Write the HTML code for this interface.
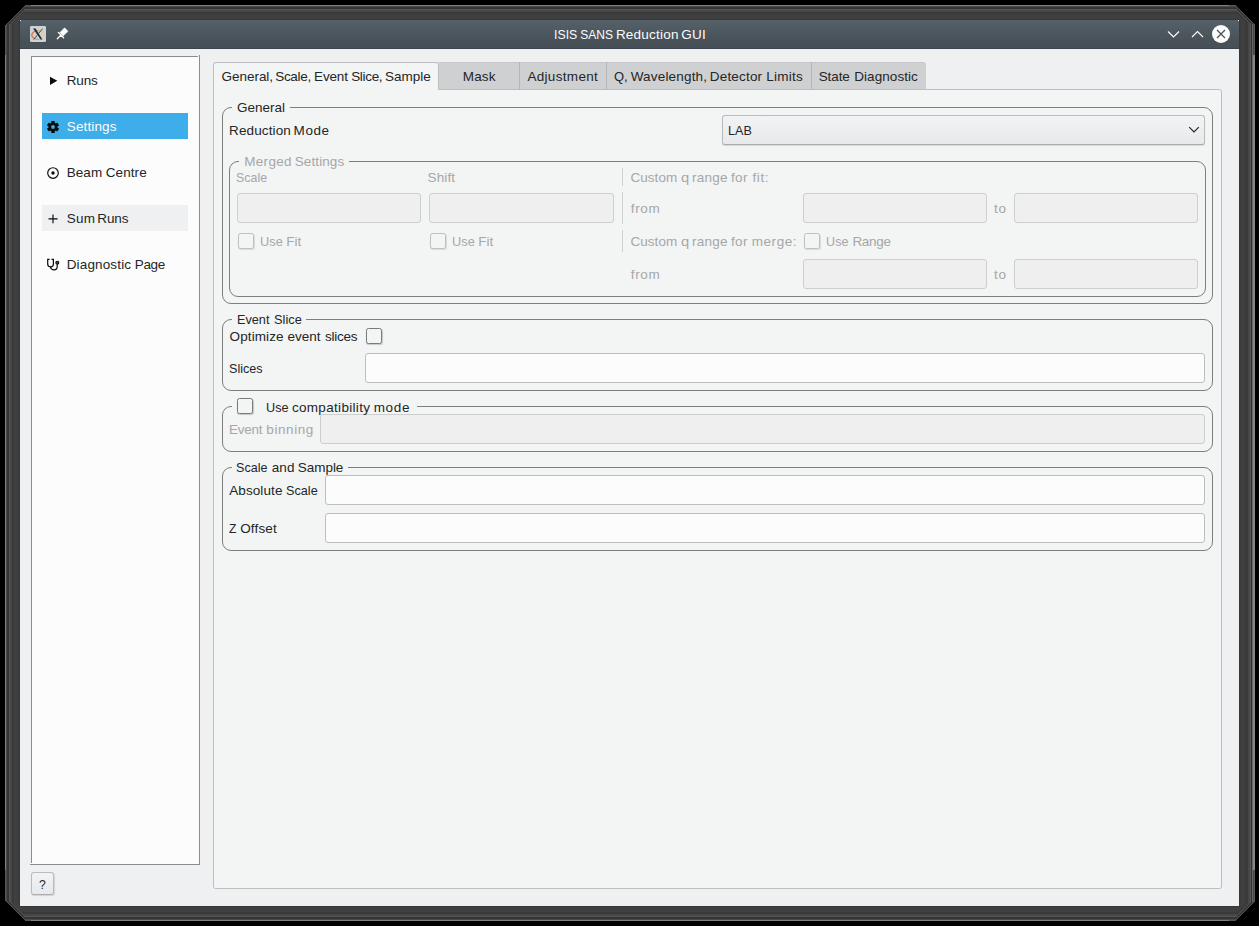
<!DOCTYPE html>
<html><head><meta charset="utf-8"><title>ISIS SANS Reduction GUI</title>
<style>
html,body{margin:0;padding:0;}
body{width:1259px;height:926px;background:#000;overflow:hidden;position:relative;font-family:"Liberation Sans",sans-serif;font-size:13.5px;color:#232627;}
.abs{position:absolute;}
#shadow{position:absolute;left:0;top:0;width:1259px;height:926px;}
#win{position:absolute;left:20px;top:20px;width:1219px;height:886px;background:#eff0f1;}
#titlebar{position:absolute;left:0;top:0;width:1219px;height:29px;background:linear-gradient(#556068,#475057 80%,#475057);}
#titlebar:after{content:"";position:absolute;left:0;right:0;bottom:0;height:1px;background:#3c454d;}
.t{position:absolute;white-space:pre;line-height:20px;height:20px;}
#side{position:absolute;left:31px;top:56px;width:169px;height:809px;background:#fcfcfc;}
.sl{position:absolute;background:#888d92;}
.sel{position:absolute;left:42px;top:113px;width:146px;height:26px;background:#3daee9;}
.hov{position:absolute;left:42px;top:205px;width:146px;height:26px;background:#eff0f1;}
#pane{position:absolute;left:213px;top:89px;width:1007px;height:798px;border:1px solid #bcbebf;border-radius:0 2.5px 2.5px 2.5px;background:#f3f4f4;}
.tabbar{position:absolute;left:439px;top:62px;width:487px;height:27px;background:#cfd0d1;border-top:1px solid #c6c7c8;border-radius:0 3px 0 0;box-sizing:border-box;}
.tabsep{position:absolute;top:62px;width:1px;height:27px;background:#b4b5b6;}
#tabsel{position:absolute;left:213px;top:62px;width:224px;height:27px;border:1px solid #bcbebf;border-bottom:none;border-radius:3px 3px 0 0;background:#f3f4f4;}
.gb{position:absolute;border:1px solid #7d7e7f;border-radius:9px;box-sizing:border-box;}
.gap{position:absolute;height:3px;background:#f3f4f4;}
.le{position:absolute;box-sizing:border-box;border:1px solid #bcbebf;border-radius:3px;background:#fcfcfc;height:30px;}
.le.dis{background:#efefef;border-color:#cdcecf;}
.cb{position:absolute;box-sizing:border-box;width:16px;height:16px;border:1px solid #777a7c;border-radius:2.5px;background:#f3f4f4;box-shadow:0.5px 1px 1px rgba(0,0,0,0.18);}
.cb.dis{border-color:#bdbfc0;box-shadow:0.5px 1px 1px rgba(0,0,0,0.10);}
.vl{position:absolute;width:1px;background:#cfd0d1;}
#combo{position:absolute;left:722px;top:115px;width:483px;height:30px;box-sizing:border-box;border:1px solid #b9bbbc;border-radius:3px;background:linear-gradient(#f2f3f4,#e8e9ea);box-shadow:0 1px 1px rgba(0,0,0,0.12);border-bottom-color:#a9abac;}
#help{position:absolute;left:31px;top:872px;width:23px;height:23px;box-sizing:border-box;border:1px solid #b9bbbc;border-bottom-color:#a9abac;border-radius:3px;background:linear-gradient(#f2f3f4,#e8e9ea);box-shadow:0.5px 1px 1px rgba(0,0,0,0.12);}
svg{position:absolute;overflow:visible;}

</style></head>
<body>
<svg id="shadow" width="1259" height="926" viewBox="0 0 1259 926" shape-rendering="crispEdges"><polygon points="25,5 1235,5 1255,25 1255,901 1235,921 25,921 5,901 5,25" fill="#555555"/><polygon points="25,6 1235,6 1254,25 1254,901 1235,920 25,920 6,901 6,25" fill="#4a4a4a"/><polygon points="24,7 1236,7 1253,24 1253,902 1236,919 24,919 7,902 7,24" fill="#363636"/><polygon points="24,8 1236,8 1252,24 1252,902 1236,918 24,918 8,902 8,24" fill="#343434"/><polygon points="24,9 1236,9 1251,24 1251,902 1236,917 24,917 9,902 9,24" fill="#555555"/><polygon points="23,10 1237,10 1250,23 1250,903 1237,916 23,916 10,903 10,23" fill="#484848"/><polygon points="23,11 1237,11 1249,23 1249,903 1237,915 23,915 11,903 11,23" fill="#464646"/><polygon points="23,12 1237,12 1248,23 1248,903 1237,914 23,914 12,903 12,23" fill="#3a3a3a"/><polygon points="22,13 1237,13 1246,22 1246,904 1237,913 22,913 13,904 13,22" fill="#393939"/><polygon points="22,14 1237,14 1245,22 1245,904 1237,912 22,912 14,904 14,22" fill="#404040"/><polygon points="22,15 1237,15 1244,22 1244,904 1237,911 22,911 15,904 15,22" fill="#3f3f3f"/><polygon points="21,16 1238,16 1243,21 1243,905 1238,910 21,910 16,905 16,21" fill="#3f3f3f"/><polygon points="21,17 1238,17 1242,21 1242,905 1238,909 21,909 17,905 17,21" fill="#3f3f3f"/><polygon points="21,18 1238,18 1241,21 1241,905 1238,908 21,908 18,905 18,21" fill="#3d3d3d"/><polygon points="20,19 1239,19 1240,20 1240,906 1239,907 20,907 19,906 19,20" fill="#383838"/><rect x="31" y="5" width="1198" height="1" fill="#808080"/><rect x="5" y="55" width="1" height="815" fill="#808080"/><rect x="31" y="920" width="1198" height="1" fill="#808080"/><rect x="1253" y="55" width="2" height="815" fill="#858585"/><rect x="1252" y="24" width="1" height="878" fill="#666"/></svg>
<div id="win">
 <div id="titlebar"></div>
</div>
<!-- titlebar icons -->
<svg style="left:30px;top:26px" width="16" height="16" viewBox="0 0 16 16">
 <defs><linearGradient id="xg" x1="0" x2="1" y1="0" y2="0"><stop offset="0" stop-color="#e8521a"/><stop offset="0.55" stop-color="#f0a050"/><stop offset="1" stop-color="#f0d090"/></linearGradient></defs>
 <rect x="0" y="0" width="16" height="16" rx="1.2" fill="#c9d3d9"/>
 <ellipse cx="8" cy="9" rx="6.2" ry="4.4" fill="none" stroke="url(#xg)" stroke-width="1.2" opacity="0.9"/>
 <path d="M3 2.6 L5.6 2.6 L12.4 13.6 L10.6 13.6 Z" fill="#2a2d30"/>
 <path d="M12.6 2.6 L3.6 13.6" stroke="#3a3d40" stroke-width="0.9"/>
</svg>
<svg style="left:52px;top:24px" width="20" height="20" viewBox="0 0 20 20"><path d="M12.6 3.8 L16 7.3 L11.2 11.9 L7.9 8.5 Z" fill="#fcfcfc" stroke="#fcfcfc" stroke-width="0.5" stroke-linejoin="round"/><path d="M6.3 8.4 L11.6 13.7 M8.8 11.2 L5.3 14.7" stroke="#fcfcfc" stroke-width="1.3" stroke-linecap="round" fill="none"/></svg>
<!-- window buttons -->
<svg style="left:1166.5px;top:28.3px" width="13" height="13" viewBox="0 0 13 13"><path d="M1 3.5 L6.5 9 L12 3.5" fill="none" stroke="#fcfcfc" stroke-width="1.2"/></svg>
<svg style="left:1190.5px;top:28.3px" width="13" height="13" viewBox="0 0 13 13"><path d="M1 9 L6.5 3.5 L12 9" fill="none" stroke="#fcfcfc" stroke-width="1.2"/></svg>
<svg style="left:1212px;top:25px" width="18" height="18" viewBox="0 0 18 18"><circle cx="9" cy="9" r="9" fill="#fcfcfc"/><path d="M5 5 L13 13 M13 5 L5 13" stroke="#475057" stroke-width="1.2" fill="none"/></svg>

<div class="abs cornerpx" style="left:20px;top:20px;width:1px;height:1px;background:#e4e6e7"></div><div class="abs cornerpx" style="left:1238px;top:20px;width:1px;height:1px;background:#e4e6e7"></div><div id="side"></div><div class="sl" style="left:31px;top:56px;width:167px;height:1px"></div><div class="sl" style="left:31px;top:56px;width:1px;height:807px"></div><div class="sl" style="left:199px;top:55px;width:1px;height:810px"></div><div class="sl" style="left:30px;top:864px;width:170px;height:1px"></div>
<div class="sel"></div>
<div class="hov"></div>
<!-- sidebar icons -->
<svg style="left:49px;top:76px" width="10" height="10" viewBox="0 0 10 10"><path d="M1 0.7 L8.3 4.85 L1 9 Z" fill="#0b0b0b"/></svg>
<svg style="left:46px;top:120px" width="14" height="14" viewBox="0 0 14 14">
 <g fill="#0b0b0b"><circle cx="7" cy="7" r="4.4"/>
 <rect x="5.25" y="1" width="3.5" height="12" rx="0.5"/><rect x="5.25" y="1" width="3.5" height="12" rx="0.5" transform="rotate(60 7 7)"/><rect x="5.25" y="1" width="3.5" height="12" rx="0.5" transform="rotate(120 7 7)"/></g>
 <circle cx="7" cy="7" r="1.9" fill="#3daee9"/>
</svg>
<svg style="left:47px;top:166.5px" width="12" height="12" viewBox="0 0 12 12"><circle cx="6" cy="6" r="5.3" fill="none" stroke="#0b0b0b" stroke-width="1.15"/><circle cx="6" cy="6" r="1.7" fill="#0b0b0b"/></svg>
<svg style="left:48px;top:214px" width="10" height="10" viewBox="0 0 10 10"><path d="M5 0.6 V9.2 M0.5 4.9 H9.6" stroke="#0b0b0b" stroke-width="1.15" fill="none"/></svg>
<svg style="left:42px;top:252px" width="24" height="24" viewBox="0 0 24 24"><path d="M7.6 7.3 H5.7 V11.9 A2.85 2.85 0 0 0 11.4 11.9 V7.3 H9.5 M8.4 14.8 C8.9 16.9 10.4 17.8 12 17.8 C14 17.8 15.2 16.5 15.2 14.5 V12.2" fill="none" stroke="#0b0b0b" stroke-width="1.2"/><circle cx="15.3" cy="10.7" r="1.45" fill="#555" stroke="#0b0b0b" stroke-width="1.1"/></svg>

<!-- tabs -->
<div class="tabbar"></div>
<div class="tabsep" style="left:519px"></div>
<div class="tabsep" style="left:606px"></div>
<div class="tabsep" style="left:811px"></div>
<div id="pane"></div>
<div id="tabsel"></div>

<!-- group boxes -->
<div class="gb" style="left:222px;top:107px;width:991px;height:197px"></div>
<div class="gap" style="left:232px;top:106px;width:58px"></div>
<div class="gb" style="left:229px;top:161px;width:977px;height:136px"></div>
<div class="gap" style="left:239px;top:160px;width:110px"></div>
<div class="gb" style="left:222px;top:319px;width:991px;height:72px"></div>
<div class="gap" style="left:232px;top:318px;width:74px"></div>
<div class="gb" style="left:222px;top:406px;width:991px;height:46px"></div>
<div class="gap" style="left:232px;top:405px;width:185px"></div>
<div class="gb" style="left:222px;top:467px;width:991px;height:84px"></div>
<div class="gap" style="left:232px;top:466px;width:116px"></div>

<div id="combo"></div>
<svg style="left:1188px;top:125px" width="12" height="10" viewBox="0 0 12 10"><path d="M1.2 2.2 L6 7 L10.8 2.2" fill="none" stroke="#232627" stroke-width="1.2"/></svg>

<div class="le dis" style="left:237px;top:193px;width:184px"></div>
<div class="le dis" style="left:429px;top:193px;width:185px"></div>
<div class="le dis" style="left:803px;top:193px;width:184px"></div>
<div class="le dis" style="left:1014px;top:193px;width:184px"></div>
<div class="le dis" style="left:803px;top:259px;width:184px"></div>
<div class="le dis" style="left:1014px;top:259px;width:184px"></div>
<div class="vl" style="left:622px;top:168px;height:18px"></div>
<div class="vl" style="left:622px;top:192px;height:32px"></div>
<div class="vl" style="left:622px;top:230px;height:22px"></div>
<div class="cb dis" style="left:238px;top:233px"></div>
<div class="cb dis" style="left:430px;top:233px"></div>
<div class="cb dis" style="left:804px;top:233px"></div>

<div class="cb" style="left:366px;top:328px"></div>
<div class="le" style="left:365px;top:353px;width:840px"></div>
<div class="cb" style="left:237px;top:398px"></div>
<div class="le dis" style="left:320px;top:414px;width:885px"></div>
<div class="le" style="left:325px;top:475px;width:880px"></div>
<div class="le" style="left:325px;top:513px;width:880px"></div>
<div id="help"></div>

<div id="texts">
<span class="t" style="left:553.7px;top:25px;color:#fcfcfc;font-size:13.5px;letter-spacing:0.000px;transform:scaleX(0.907);transform-origin:1.32px 0">ISIS</span>
<span class="t" style="left:579.7px;top:25px;color:#fcfcfc;font-size:13.5px;letter-spacing:0.000px;transform:scaleX(0.892);transform-origin:1.16px 0">SANS</span>
<span class="t" style="left:615.9px;top:25px;color:#fcfcfc;font-size:13.5px;letter-spacing:0.213px">Reduction</span>
<span class="t" style="left:681.3px;top:25px;color:#fcfcfc;font-size:13.5px;letter-spacing:0.225px">GUI</span>
<span class="t" style="left:66.8px;top:71px;color:#232627;font-size:13.5px;letter-spacing:-0.209px">Runs</span>
<span class="t" style="left:66.8px;top:117px;color:#fcfcfc;font-size:13.5px;letter-spacing:0.124px">Settings</span>
<span class="t" style="left:66.7px;top:163px;color:#232627;font-size:13.5px;letter-spacing:0.056px">Beam</span>
<span class="t" style="left:105.8px;top:163px;color:#232627;font-size:13.5px;letter-spacing:0.071px">Centre</span>
<span class="t" style="left:66.7px;top:209px;color:#232627;font-size:13.5px;letter-spacing:0.234px">Sum</span>
<span class="t" style="left:97.3px;top:209px;color:#232627;font-size:13.5px;letter-spacing:-0.142px">Runs</span>
<span class="t" style="left:66.7px;top:255px;color:#232627;font-size:13.5px;letter-spacing:0.148px">Diagnostic</span>
<span class="t" style="left:134.7px;top:255px;color:#232627;font-size:13.5px;letter-spacing:-0.316px">Page</span>
<span class="t" style="left:221.5px;top:67px;color:#232627;font-size:13.5px;letter-spacing:-0.028px">General,</span>
<span class="t" style="left:275.2px;top:67px;color:#232627;font-size:13.5px;letter-spacing:-0.284px">Scale,</span>
<span class="t" style="left:314.1px;top:67px;color:#232627;font-size:13.5px;letter-spacing:-0.173px">Event</span>
<span class="t" style="left:351.2px;top:67px;color:#232627;font-size:13.5px;letter-spacing:-0.324px">Slice,</span>
<span class="t" style="left:385.0px;top:67px;color:#232627;font-size:13.5px;letter-spacing:-0.018px">Sample</span>
<span class="t" style="left:462.8px;top:67px;color:#232627;font-size:13.5px;letter-spacing:0.132px">Mask</span>
<span class="t" style="left:527.4px;top:67px;color:#232627;font-size:13.5px;letter-spacing:0.324px">Adjustment</span>
<span class="t" style="left:614.1px;top:67px;color:#232627;font-size:13.5px;letter-spacing:0.000px;transform:scaleX(0.960);transform-origin:0.68px 0">Q,</span>
<span class="t" style="left:630.7px;top:67px;color:#232627;font-size:13.5px;letter-spacing:0.181px">Wavelength,</span>
<span class="t" style="left:709.8px;top:67px;color:#232627;font-size:13.5px;letter-spacing:0.178px">Detector</span>
<span class="t" style="left:766.2px;top:67px;color:#232627;font-size:13.5px;letter-spacing:0.238px">Limits</span>
<span class="t" style="left:818.7px;top:67px;color:#232627;font-size:13.5px;letter-spacing:-0.099px">State</span>
<span class="t" style="left:854.2px;top:67px;color:#232627;font-size:13.5px;letter-spacing:0.070px">Diagnostic</span>
<span class="t" style="left:237.1px;top:98px;color:#232627;font-size:13.5px;letter-spacing:-0.002px">General</span>
<span class="t" style="left:229.1px;top:121px;color:#232627;font-size:13.5px;letter-spacing:0.113px">Reduction</span>
<span class="t" style="left:293.6px;top:121px;color:#232627;font-size:13.5px;letter-spacing:0.586px">Mode</span>
<span class="t" style="left:727.9px;top:121px;color:#232627;font-size:13.5px;letter-spacing:0.000px;transform:scaleX(0.930);transform-origin:1.21px 0">LAB</span>
<span class="t" style="left:244.2px;top:152px;color:#a5a7a8;font-size:13.5px;letter-spacing:0.316px">Merged</span>
<span class="t" style="left:294.7px;top:152px;color:#a5a7a8;font-size:13.5px;letter-spacing:0.110px">Settings</span>
<span class="t" style="left:236.0px;top:168px;color:#a5a7a8;font-size:13.5px;letter-spacing:0.000px;transform:scaleX(0.916);transform-origin:1.16px 0">Scale</span>
<span class="t" style="left:427.5px;top:168px;color:#a5a7a8;font-size:13.5px;letter-spacing:0.149px">Shift</span>
<span class="t" style="left:630.5px;top:168px;color:#a5a7a8;font-size:13.5px;letter-spacing:0.031px">Custom</span>
<span class="t" style="left:681.3px;top:168px;color:#a5a7a8;font-size:13.5px;letter-spacing:0.000px;transform:scaleX(1.094);transform-origin:0.63px 0">q</span>
<span class="t" style="left:691.9px;top:168px;color:#a5a7a8;font-size:13.5px;letter-spacing:0.269px">range</span>
<span class="t" style="left:730.9px;top:168px;color:#a5a7a8;font-size:13.5px;letter-spacing:0.475px">for</span>
<span class="t" style="left:752.4px;top:168px;color:#a5a7a8;font-size:13.5px;letter-spacing:0.652px">fit:</span>
<span class="t" style="left:630.8px;top:199px;color:#a5a7a8;font-size:13.5px;letter-spacing:0.628px">from</span>
<span class="t" style="left:994.1px;top:199px;color:#a5a7a8;font-size:13.5px;letter-spacing:0.729px">to</span>
<span class="t" style="left:259.9px;top:232px;color:#a5a7a8;font-size:13.5px;letter-spacing:0.000px;transform:scaleX(0.948);transform-origin:1.19px 0">Use</span>
<span class="t" style="left:286.3px;top:232px;color:#a5a7a8;font-size:13.5px;letter-spacing:-0.078px">Fit</span>
<span class="t" style="left:451.9px;top:232px;color:#a5a7a8;font-size:13.5px;letter-spacing:0.000px;transform:scaleX(0.948);transform-origin:1.19px 0">Use</span>
<span class="t" style="left:478.3px;top:232px;color:#a5a7a8;font-size:13.5px;letter-spacing:-0.078px">Fit</span>
<span class="t" style="left:630.5px;top:232px;color:#a5a7a8;font-size:13.5px;letter-spacing:0.031px">Custom</span>
<span class="t" style="left:681.3px;top:232px;color:#a5a7a8;font-size:13.5px;letter-spacing:0.000px;transform:scaleX(1.094);transform-origin:0.63px 0">q</span>
<span class="t" style="left:691.9px;top:232px;color:#a5a7a8;font-size:13.5px;letter-spacing:0.269px">range</span>
<span class="t" style="left:730.9px;top:232px;color:#a5a7a8;font-size:13.5px;letter-spacing:0.475px">for</span>
<span class="t" style="left:751.7px;top:232px;color:#a5a7a8;font-size:13.5px;letter-spacing:0.570px">merge:</span>
<span class="t" style="left:826.1px;top:232px;color:#a5a7a8;font-size:13.5px;letter-spacing:0.000px;transform:scaleX(0.930);transform-origin:1.19px 0">Use</span>
<span class="t" style="left:852.4px;top:232px;color:#a5a7a8;font-size:13.5px;letter-spacing:-0.286px">Range</span>
<span class="t" style="left:630.8px;top:265px;color:#a5a7a8;font-size:13.5px;letter-spacing:0.628px">from</span>
<span class="t" style="left:994.1px;top:265px;color:#a5a7a8;font-size:13.5px;letter-spacing:0.729px">to</span>
<span class="t" style="left:236.7px;top:310px;color:#232627;font-size:13.5px;letter-spacing:0.000px;transform:scaleX(0.937);transform-origin:1.21px 0">Event</span>
<span class="t" style="left:273.5px;top:310px;color:#232627;font-size:13.5px;letter-spacing:0.000px;transform:scaleX(0.948);transform-origin:1.16px 0">Slice</span>
<span class="t" style="left:229.6px;top:327px;color:#232627;font-size:13.5px;letter-spacing:0.098px">Optimize</span>
<span class="t" style="left:287.6px;top:327px;color:#232627;font-size:13.5px;letter-spacing:-0.010px">event</span>
<span class="t" style="left:324.9px;top:327px;color:#232627;font-size:13.5px;letter-spacing:-0.252px">slices</span>
<span class="t" style="left:229.1px;top:359px;color:#232627;font-size:13.5px;letter-spacing:0.000px;transform:scaleX(0.932);transform-origin:1.16px 0">Slices</span>
<span class="t" style="left:265.6px;top:398px;color:#232627;font-size:13.5px;letter-spacing:0.000px;transform:scaleX(0.939);transform-origin:1.19px 0">Use</span>
<span class="t" style="left:291.9px;top:398px;color:#232627;font-size:13.5px;letter-spacing:0.320px">compatibility</span>
<span class="t" style="left:373.7px;top:398px;color:#232627;font-size:13.5px;letter-spacing:0.686px">mode</span>
<span class="t" style="left:229.1px;top:420px;color:#a5a7a8;font-size:13.5px;letter-spacing:-0.298px">Event</span>
<span class="t" style="left:266.3px;top:420px;color:#a5a7a8;font-size:13.5px;letter-spacing:0.578px">binning</span>
<span class="t" style="left:236.2px;top:458px;color:#232627;font-size:13.5px;letter-spacing:0.000px;transform:scaleX(0.926);transform-origin:1.16px 0">Scale</span>
<span class="t" style="left:271.7px;top:458px;color:#232627;font-size:13.5px;letter-spacing:0.100px">and</span>
<span class="t" style="left:297.7px;top:458px;color:#232627;font-size:13.5px;letter-spacing:-0.018px">Sample</span>
<span class="t" style="left:229.2px;top:481px;color:#232627;font-size:13.5px;letter-spacing:0.095px">Absolute</span>
<span class="t" style="left:285.9px;top:481px;color:#232627;font-size:13.5px;letter-spacing:0.000px;transform:scaleX(0.935);transform-origin:1.16px 0">Scale</span>
<span class="t" style="left:229.0px;top:519px;color:#232627;font-size:13.5px;letter-spacing:0.000px;transform:scaleX(0.895);transform-origin:0.47px 0">Z</span>
<span class="t" style="left:240.2px;top:519px;color:#232627;font-size:13.5px;letter-spacing:0.156px">Offset</span>
<span class="t" style="left:39.3px;top:875px;color:#232627;font-size:13.5px;letter-spacing:0.000px;transform:scaleX(0.904);transform-origin:0.75px 0">?</span>
</div>
</body></html>
